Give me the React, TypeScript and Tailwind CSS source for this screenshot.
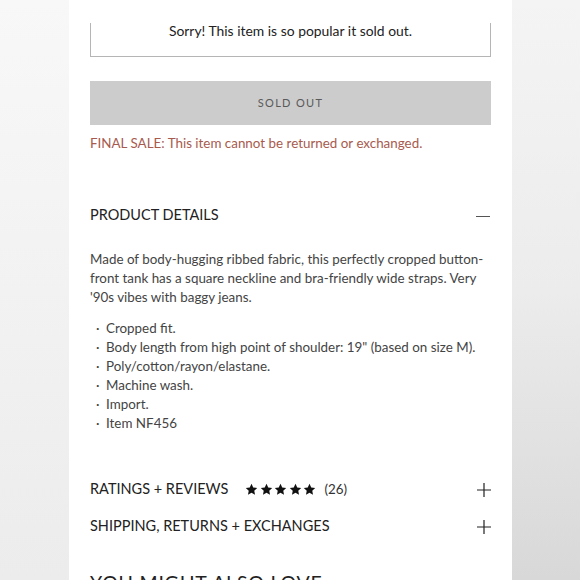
import React from "react";

const Star = () => (
  <svg viewBox="0 0 24 24" className="w-[13px] h-[13px]" fill="#111">
    <path d="M12 1.5l3.2 6.7 7.3.9-5.4 5.1 1.4 7.3L12 18l-6.5 3.5 1.4-7.3-5.4-5.1 7.3-.9z" />
  </svg>
);

const Plus = () => (
  <svg viewBox="0 0 14 14" className="w-[14px] h-[14px] mt-[2px]" stroke="#222" strokeWidth="1.2">
    <path d="M7 0v14M0 7h14" />
  </svg>
);

const bullets = [
  "Cropped fit.",
  'Body length from high point of shoulder: 19" (based on size M).',
  "Poly/cotton/rayon/elastane.",
  "Machine wash.",
  "Import.",
  "Item NF456",
];

export default function App() {
  return (
    <div className="w-[580px] h-[580px] overflow-hidden flex" style={{ fontFamily: "Lato, 'Noto Sans', sans-serif" }}>
      {/* blurred page edges */}
      <div className="w-[69px] bg-gradient-to-b from-[#f8f8f8] via-[#f2f2f2] to-[#ececec]" />

      <div className="w-[443px] bg-white px-[21px] text-[#222]">
        {/* sold-out notice */}
        <div className="mt-[23px] h-[34px] border-x border-b border-[#b5b5b5] text-center text-[13.9px] leading-[16px] text-[#222]">
          Sorry! This item is so popular it sold out.
        </div>

        <div className="mt-[24px] h-[44px] bg-[#cccccc] flex items-center justify-center text-[11px] tracking-[0.12em] text-[#5a5a5a]">
          SOLD OUT
        </div>

        <p className="mt-[9px] text-[13.4px] leading-[18px] text-[#a85a4e]">
          FINAL SALE: This item cannot be returned or exchanged.
        </p>

        {/* product details */}
        <div className="mt-[53px] flex items-center justify-between h-[20px]">
          <span className="text-[14.5px]">PRODUCT DETAILS</span>
          <span className="w-[14px] h-px bg-[#555] mr-[1px] mt-[2px]" />
        </div>

        <p className="mt-[25px] text-[13.4px] leading-[19px] text-[#444]">
          Made of body-hugging ribbed fabric, this perfectly cropped button-front tank has a square neckline and bra-friendly wide straps. Very '90s vibes with baggy jeans.
        </p>

        <ul className="mt-[12px] text-[13.4px] leading-[19px] text-[#444]">
          {bullets.map((b) => (
            <li key={b} className="flex">
              <span className="w-[16px] pl-[6px]">·</span>
              <span>{b}</span>
            </li>
          ))}
        </ul>

        {/* accordions */}
        <div className="mt-[46px] flex items-center justify-between h-[20px]">
          <div className="flex items-center">
            <span className="text-[14.5px]">RATINGS + REVIEWS</span>
            <span className="ml-[17px] flex gap-[1.5px]">
              <Star />
              <Star />
              <Star />
              <Star />
              <Star />
            </span>
            <span className="ml-[8px] text-[13.4px] text-[#333]">(26)</span>
          </div>
          <Plus />
        </div>

        <div className="mt-[17px] flex items-center justify-between h-[20px]">
          <span className="text-[14.5px]">SHIPPING, RETURNS + EXCHANGES</span>
          <Plus />
        </div>

        <h2 className="mt-[36px] text-[19.5px] leading-[22px] tracking-[0.04em]">YOU MIGHT ALSO LOVE</h2>
      </div>

      <div className="flex-1 bg-gradient-to-b from-[#f4f4f4] via-[#ececec] to-[#d8d8d8]" />
    </div>
  );
}
